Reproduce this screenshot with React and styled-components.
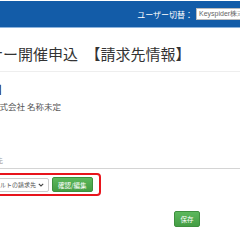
import React from "react";
import styled, { createGlobalStyle } from "styled-components";

const GlobalStyle = createGlobalStyle`
  html, body {
    margin: 0;
    padding: 0;
    background: #fff;
    overflow: hidden;
  }
  body {
    font-family: "Noto Sans CJK JP", "Noto Sans", sans-serif;
    color: #333;
  }
`;

const Page = styled.div`
  width: 240px;
  height: 240px;
  overflow: hidden;
  position: relative;
`;

const TopBar = styled.header`
  height: 26px;
  margin-top: 1px;
  background: #135ca8;
  border-bottom: 1px solid #8db3dc;
  display: flex;
  align-items: center;
  justify-content: flex-end;
  gap: 3px;
`;

const UserLabel = styled.span`
  color: #fff;
  font-size: 8px;
  white-space: nowrap;
`;

const UserInput = styled.div`
  width: 60px;
  height: 10px;
  margin-right: -20px;
  background: #fff;
  border: 1px solid #bbb;
  font-family: "Liberation Sans", Arial, sans-serif;
  font-size: 7px;
  line-height: 10px;
  color: #666;
  padding-left: 2px;
  white-space: nowrap;
  overflow: hidden;
`;

const Main = styled.main`
  margin-left: -42px;
`;

const Title = styled.h1`
  margin: 0;
  padding: 16px 0 7px;
  font-size: 15px;
  font-weight: 400;
  line-height: 20px;
  color: #333;
  white-space: nowrap;
  border-bottom: 1px solid #eee;
`;

const SectionHead = styled.h2`
  margin: 11px 0 0 -5px;
  font-size: 11px;
  font-weight: 700;
  line-height: 12px;
  color: #333;
  white-space: nowrap;
`;

const Value = styled.p`
  margin: 5px 0 0;
  padding-left: 33px;
  font-size: 8.5px;
  line-height: 12px;
  color: #555;
  white-space: nowrap;
`;

const Label = styled.p`
  margin: 44px 0 0;
  font-size: 7px;
  line-height: 9px;
  color: #999;
  padding-left: 24px;
  white-space: nowrap;
`;

const Divider = styled.div`
  margin-top: 3px;
  border-top: 1px solid #d4d4d4;
  width: 320px;
`;

const Highlight = styled.div`
  margin-top: 4px;
  margin-left: 14px;
  width: 129px;
  height: 23px;
  box-sizing: border-box;
  border: 2px solid #e8141c;
  border-radius: 4px;
  display: flex;
  align-items: center;
  gap: 3px;
  padding-left: 4px;
`;

const Select = styled.div`
  width: 71px;
  height: 14px;
  box-sizing: border-box;
  border: 1px solid #ccc;
  border-radius: 2px;
  background: #fff;
  display: flex;
  align-items: center;
  justify-content: space-between;
  padding: 0 4px 0 3px;
  font-size: 6px;
  color: #555;
  white-space: nowrap;
`;

const Button = styled.div`
  display: inline-flex;
  align-items: center;
  justify-content: center;
  height: 15px;
  padding: 0 ${(p) => p.$pad || 5}px;
  background: linear-gradient(#5cb85c, #449d44);
  border: 1px solid #3e8f3e;
  border-radius: 2px;
  color: #fff;
  font-size: 6.5px;
  white-space: nowrap;
  box-sizing: border-box;
`;

const Footer = styled.div`
  display: flex;
  justify-content: flex-end;
  margin-top: 15px;
  padding-right: 40px;
`;

export default function App() {
  return (
    <Page>
      <GlobalStyle />
      <TopBar>
        <UserLabel>ユーザー切替：</UserLabel>
        <UserInput>Keyspider株式会社</UserInput>
      </TopBar>
      <Main>
        <Title>セミナー開催申込　【請求先情報】</Title>
        <SectionHead>【請求先】</SectionHead>
        <Value>株式会社 名称未定</Value>
        <Label>請求先</Label>
        <Divider />
        <Highlight>
          <Select>
            <span>デフォルトの請求先</span>
            <svg width="6" height="4" viewBox="0 0 6 4">
              <path d="M0.8 0.8 L3 3 L5.2 0.8" fill="none" stroke="#444" strokeWidth="1.1" />
            </svg>
          </Select>
          <Button $pad={5}>確認/編集</Button>
        </Highlight>
      </Main>
      <Footer>
        <Button style={{ width: 26, height: 16 }}>保存</Button>
      </Footer>
    </Page>
  );
}
